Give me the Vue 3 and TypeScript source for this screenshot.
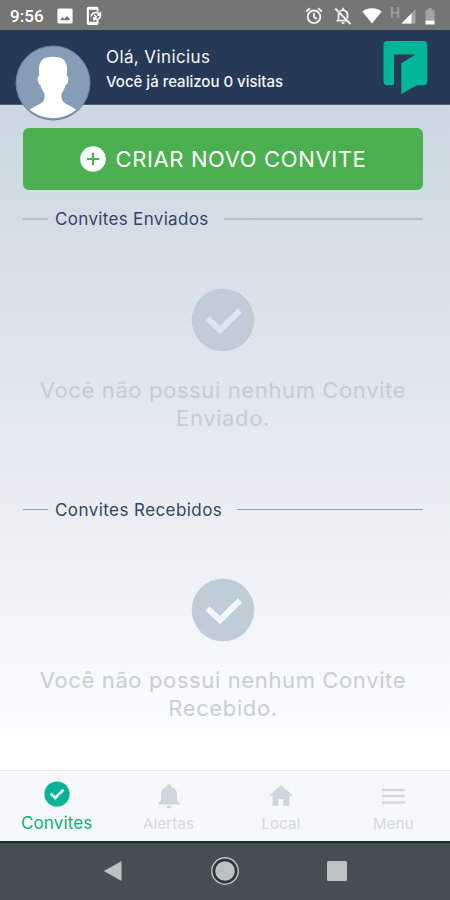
<script setup lang="ts">
interface Section {
  id: string
  title: string
  message: string
}
interface Tab {
  id: string
  label: string
}

const sections: Section[] = [
  { id: 'sent', title: 'Convites Enviados', message: 'Você não possui nenhum Convite Enviado.' },
  { id: 'received', title: 'Convites Recebidos', message: 'Você não possui nenhum Convite Recebido.' },
]
const tabs: Tab[] = [
  { id: 'invites', label: 'Convites' },
  { id: 'alerts', label: 'Alertas' },
  { id: 'local', label: 'Local' },
  { id: 'menu', label: 'Menu' },
]
const active = 'invites'
</script>

<template>
  <div class="screen">
    <div class="status">
      <span class="clock">9:56</span>
      <svg class="st-image" width="16" height="16" viewBox="0 0 16 16">
        <path fill="#fff" fill-rule="evenodd" d="M2 .5h12a1.6 1.6 0 0 1 1.6 1.6v11.8a1.6 1.6 0 0 1-1.6 1.6H2A1.6 1.6 0 0 1 .4 13.900V2.100A1.600 1.600 0 0 1 2 .5zM3 12.300h10.400L10 7.800l-2.600 3.300-1.800-2.100z" />
      </svg>
      <svg class="st-phone" width="16" height="20" viewBox="0 0 16 20">
        <path fill="#fff" fill-rule="evenodd" d="M2.500.8h8.300a1.700 1.700 0 0 1 1.700 1.700V5.500h-1.900V3.800H2.900v12h7.700v-1.600h1.900v3.100a1.700 1.700 0 0 1-1.700 1.700H2.500a1.700 1.700 0 0 1-1.700-1.700V2.500A1.700 1.700 0 0 1 2.500.8z" />
        <path fill="none" stroke="#fff" stroke-width="1.500" d="M5.200 10.500C5.500 6.500 10.500 5 13.800 8.500M14.500 9.500c0 3.500-3.500 5-6.200 3.200M14.400 5.800v3.400h-3.200M7.800 14.500v-2.700h2.700M8 8.800l3 2.700" />
      </svg>
      <span class="spacer"></span>
      <svg class="st-alarm" width="18" height="18" viewBox="0 0 18 18" fill="none" stroke="#f2f2f2" stroke-width="1.800">
        <circle cx="9" cy="9.800" r="6.300" />
        <path d="M1.200 4.500 5 1.300M16.800 4.500 13 1.300M9 6v4.200l3 1.700" />
      </svg>
      <svg class="st-bell" width="18" height="18" viewBox="0 0 18 18">
        <path fill="none" stroke="#f2f2f2" stroke-width="1.800" d="M1.200 1.500 16.500 17M4.500 6.500v7.200h9M6.200 4.300C9.500 1.800 13.500 4 13.500 8v3.500M2.500 13.700h3M9.200 .8v2.200" />
        <path fill="#f2f2f2" d="M7.200 15.300h3.600a1.800 1.800 0 0 1-3.600 0z" />
      </svg>
      <svg class="st-wifi" width="20" height="16" viewBox="0 0 20 16">
        <path fill="#fff" d="M.3 3.400C6-.9 14-.9 19.700 3.400L10 15.500z" />
      </svg>
      <span class="net">H</span>
      <svg class="st-signal" width="15" height="15" viewBox="0 0 15 15">
        <path fill="#a3a3a3" d="M14.500.3v14.200H.5z" />
        <path fill="#fff" d="M10.500 4.300v10.200H.5z" />
      </svg>
      <svg class="st-battery" width="10" height="17" viewBox="0 0 10 17">
        <path fill="#a3a3a3" d="M3 .3h4v1.900h2.500V12.500H.5V2.200H3z" />
        <path fill="#fff" d="M.5 12.500h9v3.500a.6.6 0 0 1-.6.6H1.100A.6.6 0 0 1 .5 16z" />
      </svg>
    </div>

    <header class="header">
      <svg class="avatar" width="76" height="76" viewBox="0 0 76 76">
        <circle cx="38" cy="38" r="37" fill="#859db7" stroke="#6d8299" stroke-width="1" />
        <path fill="#fff" d="M38 11.800c5 0 8.500.6 11 3.200 2.600 2.700 3 6 3 10 0 2-.2 4-.1 6 1.700.4 1.700 3.200 1.200 5.300-.5 2.300-1.500 3.600-2.700 3.900-.7 3.500-2.300 6-3.900 8.300-.3 3.500.2 6.300 1.500 8 2.500 3 8.500 4.500 13.200 8.300a36.500 36.500 0 0 1-46.400 0c4.700-3.800 10.700-5.300 13.200-8.300 1.300-1.700 1.800-4.500 1.500-8-1.600-2.300-3.200-4.800-3.900-8.300-1.200-.3-2.200-1.600-2.700-3.900-.5-2.100-.5-4.900 1.200-5.300.1-2-.1-4-.1-6 0-4 .4-7.300 3-10 2.500-2.600 6-3.200 11-3.200z" />
      </svg>
      <div class="greeting">
        <div class="hello">Olá, Vinicius</div>
        <div class="visits">Você já realizou 0 visitas</div>
      </div>
      <svg class="logo" width="46" height="54" viewBox="0 0 46 54">
        <path fill="#04b698" d="M4.500 0h35.800a4 4 0 0 1 4 4v36.300a4 4 0 0 1-4 4H34L18.300 53V22.200L32.700 13.600H11v28.700a2 2 0 0 1-2 2H4.500a4 4 0 0 1-4-4V4a4 4 0 0 1 4-4z" />
      </svg>
    </header>

    <main class="content">
      <button class="create" type="button">
        <svg width="26" height="26" viewBox="0 0 26 26">
          <circle cx="13" cy="13" r="12.800" fill="#fff" />
          <path d="M13 6.800v12.400M6.800 13h12.400" stroke="#4caf50" stroke-width="2.200" />
        </svg>
        <span>CRIAR NOVO CONVITE</span>
      </button>

      <section v-for="s in sections" :key="s.id" class="section" :class="s.id">
        <h2 class="title"><span>{{ s.title }}</span></h2>
        <svg class="empty-icon" width="64" height="64" viewBox="0 0 64 64">
          <circle cx="32" cy="32" r="31.300" class="disc" />
          <path d="M16.500 30.500 29 42.200 49 22.500" fill="none" class="tick" stroke-width="6" />
        </svg>
        <p class="message">{{ s.message }}</p>
      </section>
    </main>

    <nav class="tabs">
      <div v-for="t in tabs" :key="t.id" class="tab" :class="{ active: t.id === active }">
        <svg v-if="t.id === 'invites'" width="26" height="26" viewBox="0 0 26 26">
          <circle cx="13" cy="13" r="12.600" fill="#07b394" />
          <path d="m6.700 12.600 4.500 4.300 8.300-8.300" fill="none" stroke="#fff" stroke-width="2.700" />
        </svg>
        <svg v-else-if="t.id === 'alerts'" width="26" height="26" viewBox="0 0 26 26">
          <path fill="#d0d6dd" d="M13 1.200a2 2 0 0 1 2 2v.5c3.800.9 6 4 6 7.800v6.300l2.500 2.500v1.200h-21v-1.200L5 17.800v-6.300c0-3.800 2.200-6.900 6-7.800v-.5a2 2 0 0 1 2-2zM10.500 22.700h5a2.500 2.500 0 0 1-5 0z" />
        </svg>
        <svg v-else-if="t.id === 'local'" width="26" height="26" viewBox="0 0 26 26">
          <path fill="#d0d6dd" d="M13 2 25 12.800h-3.600v10.200h-5.900v-7.100h-5v7.100H4.600V12.800H1z" />
        </svg>
        <svg v-else width="26" height="26" viewBox="0 0 26 26">
          <path d="M2 6.900h23M2 12.900h23M2 19.400h23" stroke="#d4d9df" stroke-width="2.500" />
        </svg>
        <span>{{ t.label }}</span>
      </div>
    </nav>

    <div class="system">
      <svg width="20" height="22" viewBox="0 0 20 22"><path d="M.8 11 18.500 1v20z" fill="#bdc1c1" /></svg>
      <svg width="30" height="30" viewBox="0 0 30 30">
        <circle cx="15" cy="15" r="13.200" fill="#2d3539" stroke="#bdc1c1" stroke-width="1.500" />
        <circle cx="15" cy="15" r="9.800" fill="#bdc1c1" />
      </svg>
      <svg width="20" height="20" viewBox="0 0 20 20"><rect width="20" height="20" rx="1.500" fill="#bdc1c1" /></svg>
    </div>
  </div>
</template>

<style>
body { margin: 0; }
</style>

<style scoped>
* { box-sizing: border-box; }
svg { display: block; flex: none; }
.screen {
  width: 450px;
  height: 900px;
  display: flex;
  flex-direction: column;
  overflow: hidden;
  font-family: Inter, "Open Sans", sans-serif;
}
.status {
  height: 30px;
  flex: none;
  display: flex;
  align-items: center;
  padding: 2px 15px 0 10px;
  background: #757575;
  color: #fff;
}
.clock { width: 35px; font: 500 17px Roboto, sans-serif; letter-spacing: 0.1px; }
.st-image { margin-left: 12px; }
.st-phone { margin-left: 13px; }
.spacer { flex: 1; }
.st-bell { margin-left: 11px; }
.st-wifi { margin-left: 10px; }
.net { margin: -6px 0 0 8px; width: 10px; font: 500 14px/16px Roboto, sans-serif; color: #a3a3a3; }
.st-signal { margin-left: 1px; }
.st-battery { margin-left: 9px; }
.header {
  height: 75px;
  flex: none;
  display: flex;
  align-items: flex-start;
  padding: 0 21px 0 15px;
  background: #263957;
  color: #f4f6f9;
  border-bottom: 1px solid #4f6179;
  position: relative;
  z-index: 1;
}
.avatar { margin-top: 15px; }
.greeting { flex: 1; padding: 16px 0 0 15px; white-space: nowrap; }
.hello { font-size: 17px; line-height: 22px; letter-spacing: 0.4px; }
.visits { margin-top: 4px; font-size: 15px; line-height: 20px; font-weight: 500; }
.logo { margin-top: 11px; }
.content {
  flex: 1;
  min-height: 0;
  padding: 23px 27px 0 23px;
  background: linear-gradient(#cbd7e1 0%, #dae2ea 30%, #e5eaf0 52%, #f0f4f8 75%, #fafbfd 90%, #fff 100%);
}
.create {
  width: 400px;
  height: 62px;
  display: flex;
  align-items: center;
  gap: 9.500px;
  padding: 0 0 0 57px;
  border: 0;
  border-radius: 6px;
  background: #4caf50;
  color: #fff;
  font: 400 22px Inter, sans-serif;
  letter-spacing: 0.62px;
  white-space: nowrap;
}
.section { display: flex; flex-direction: column; align-items: center; height: 290.5px; }
.title {
  align-self: stretch;
  display: flex;
  align-items: center;
  margin: 18px 0 0;
  height: 23px;
  font-size: 17px;
  font-weight: 400;
  line-height: 23px;
  letter-spacing: 0.33px;
  color: #344563;
  white-space: nowrap;
}
.title::before { content: ""; width: 25px; height: 2px; margin: -1px 7px 0 0; background: #b3c1cc; }
.title::after { content: ""; flex: 1; height: 2px; margin: -1px 0 0 15px; background: #b3c1cc; }
.received .title { letter-spacing: 0.43px; }
.received .title::before, .received .title::after { height: 1px; background: #8ca3b8; }
.empty-icon { margin-top: 57px; }
.received .empty-icon { margin-top: 56.500px; }
.disc { fill: #c0ccd8; }
.tick { stroke: #dde6ee; }
.received .tick { stroke: #f4f8fc; }
.message {
  width: 380px;
  margin: 25px 0 0;
  text-align: center;
  font-size: 22px;
  line-height: 27.5px;
  font-weight: 400;
  letter-spacing: 0.62px;
  color: #c4cdd5;
}
.received { height: 285px; }
.received .message { color: #c9ced6; }
.tabs {
  height: 71px;
  flex: none;
  display: grid;
  grid-template-columns: repeat(4, 112.4px);
  background: #f6f8fa;
  border-top: 1px solid #e2e7eb;
}
.tab {
  display: flex;
  flex-direction: column;
  align-items: center;
  padding-top: 12px;
  font-size: 15px;
  line-height: 20px;
  font-weight: 400;
  letter-spacing: 0.15px;
  color: #d5d9de;
}
.tab span { margin-top: 5px; }
.tab.active { padding: 9.500px 0 0 1px; font-size: 17px; letter-spacing: 0.15px; color: #07b37f; }
.tab.active span { margin-top: 6px; }
.system {
  height: 59px;
  flex: none;
  display: flex;
  align-items: center;
  gap: 87px;
  padding: 0 0 2px 103px;
  background: #464d53;
  border-top: 2px solid #18312f;
}
</style>
